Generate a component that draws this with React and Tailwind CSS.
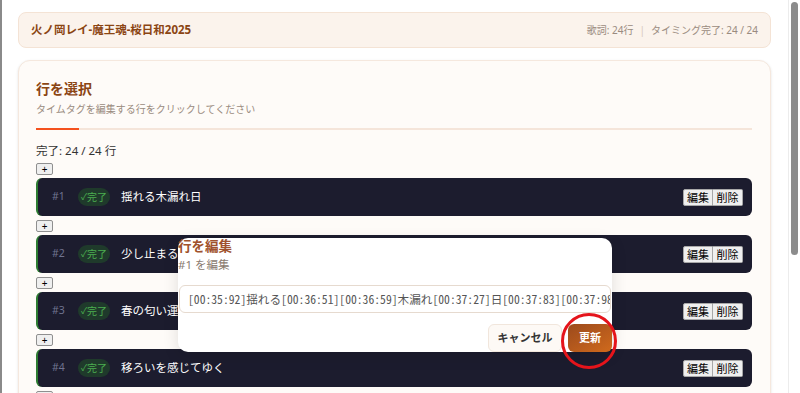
import React from "react";

const rows = [
  { n: 1, text: "揺れる木漏れ日" },
  { n: 2, text: "少し止まる時間の中で" },
  { n: 3, text: "春の匂い運ぶ風に" },
  { n: 4, text: "移ろいを感じてゆく" },
  { n: 5, text: "桜色の空の下" },
];

const jp = { fontFamily: '"Noto Sans", "Noto Sans CJK JP", sans-serif' };

function PlusButton() {
  return (
    <div className="flex">
      <button className="w-[17px] h-[12px] flex items-center justify-center text-[10px] leading-none text-black bg-[#efefef] border border-[#8f8f8f] rounded-[2px]">
        +
      </button>
    </div>
  );
}

function Row({ n, text }) {
  return (
    <div className="h-[38px] bg-[#1c1c2e] rounded-[6px] border-l-2 border-[#2e7d32] flex items-center pl-[14px] pr-[9px]">
      <span className="text-[10.5px] text-[#6f738f] w-[10px]">#{n}</span>
      <span className="ml-[16px] h-[18px] w-[32px] rounded-full bg-[#1f3a2b] text-[#4caf50] text-[10px] flex items-center justify-center whitespace-nowrap overflow-hidden">
        <span className="text-[9px]">✓</span>完了
      </span>
      <span className="ml-[11px] text-[11.5px] text-white whitespace-nowrap">{text}</span>
      <div className="ml-auto flex">
        <button className="h-[17px] w-[30px] text-[11px] leading-none text-black bg-[#efefef] border border-[#a8a8a8] rounded-l-[2px] flex items-center justify-center">
          編集
        </button>
        <button className="h-[17px] w-[30px] text-[11px] leading-none text-black bg-[#efefef] border border-l-0 border-[#a8a8a8] rounded-r-[2px] flex items-center justify-center">
          削除
        </button>
      </div>
    </div>
  );
}

export default function App() {
  return (
    <div className="relative w-[800px] h-[393px] overflow-hidden bg-white flex" style={jp}>
      <div className="w-[2px] bg-[#8a8a8a] shrink-0" />
      <div className="flex-1 pl-[16px] pr-[17px] pt-[12px] flex flex-col">
        <div className="h-[36px] shrink-0 rounded-lg bg-[#fbf3ec] border border-[#f4e3d5] flex items-center justify-between pl-[12px] pr-[12px]">
          <span className="text-[11.5px] font-bold text-[#8b4513]">火ノ岡レイ-魔王魂-桜日和2025</span>
          <span className="text-[10px] text-[#9a8b80] flex items-center">
            歌詞: 24行
            <span className="mx-[6px] text-[#d8c8bb]">|</span>
            タイミング完了: 24 / 24
          </span>
        </div>
        <div className="mt-[12px] flex-1 rounded-t-xl bg-[#fefbf8] border border-[#f5e8de] shadow-sm pl-[17px] pr-[18px] pt-[17px]">
          <div className="text-[14px] leading-[22px] font-bold text-[#8b4513]">行を選択</div>
          <div className="text-[10px] leading-[16px] text-[#9a8b80] mt-px">タイムタグを編集する行をクリックしてください</div>
          <div className="mt-[11px] h-[2px] bg-[#f5e5da] flex">
            <div className="w-[43px] h-[2px] bg-[#f4511e]" />
          </div>
          <div className="mt-[12px] text-[11.5px] leading-[18px] text-[#333]">完了: 24 / 24 行</div>
          <div className="mt-[3px] flex flex-col">
            {rows.map((r) => (
              <div key={r.n} className="flex flex-col">
                <PlusButton />
                <div className="mt-[3px] mb-[4px]">
                  <Row n={r.n} text={r.text} />
                </div>
              </div>
            ))}
          </div>
        </div>
      </div>
      <div className="w-[12px] shrink-0 border-l border-[#ececec] bg-white pt-[2px] flex justify-center">
        <div className="w-[7px] h-[253px] rounded-full bg-[#8c8c8c]" />
      </div>

      {/* edit dialog */}
      <div className="absolute left-[178px] top-[238px] w-[434px] h-[114px] bg-white rounded-[10px] shadow-[0_4px_16px_rgba(0,0,0,0.12)] flex flex-col">
        <div className="text-[13.5px] leading-[17px] font-bold text-[#a0522d]">行を編集</div>
        <div className="mt-[2px] text-[11.5px] leading-[16px] text-[#8a7b70]">#1 を編集</div>
        <div className="mt-[12px] mx-px h-[28px] rounded-[6px] border border-[#e6dacf] bg-white flex items-center pl-[8px] pr-[8px] overflow-hidden">
          <span
            className="whitespace-nowrap text-[11.65px] text-[#555]"
            style={{ fontFamily: '"Noto Sans Mono CJK JP", "DejaVu Sans Mono", "Noto Sans CJK JP", monospace' }}
          >
            [00:35:92]揺れる[00:36:51][00:36:59]木漏れ[00:37:27]日[00:37:83][00:37:98]
          </span>
        </div>
        <div className="mt-[11px] flex justify-end gap-[6px]">
          <button className="h-[28px] w-[74px] rounded-[6px] bg-[#fdf9f5] border border-[#f1e6dc] text-[11px] font-bold text-[#333] flex items-center justify-center">
            キャンセル
          </button>
          <button className="h-[28px] w-[44px] rounded-[6px] bg-gradient-to-br from-[#9c4a1c] to-[#d06a1c] text-[11px] font-bold text-white flex items-center justify-center">
            更新
          </button>
        </div>
      </div>

      {/* red annotation circle */}
      <svg className="absolute left-[558px] top-[310px]" width="62" height="62" viewBox="0 0 62 62">
        <circle cx="31" cy="31" r="26.5" fill="none" stroke="#e5141b" strokeWidth="3" />
      </svg>
    </div>
  );
}
